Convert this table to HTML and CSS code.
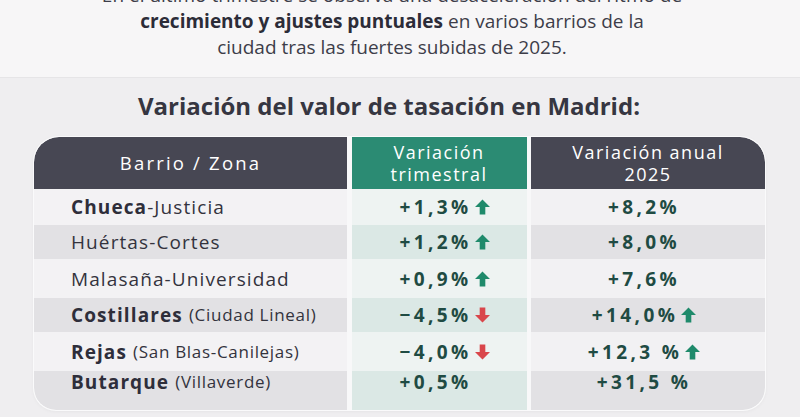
FILE: index.html
```html
<!DOCTYPE html>
<html lang="es">
<head>
<meta charset="utf-8">
<title>Variación del valor de tasación en Madrid</title>
<link rel="stylesheet" href="styles.css">
</head>
<body>
<header class="top">
  <p class="intro">En el último trimestre se observa una desaceleración del ritmo de<br><strong>crecimiento y ajustes puntuales</strong> en varios barrios de la<br>ciudad tras las fuertes subidas de 2025.</p>
</header>
<main class="content">
  <h1 class="title">Variación del valor de tasación en Madrid:</h1>
  <div class="table">
    <div class="th th-dark th-left wide">Barrio / Zona</div>
    <div class="th th-green">Variación<br>trimestral</div>
    <div class="th th-dark th-right">Variación anual<br>2025</div>

    <div class="td name light"><b>Chueca</b>-Justicia</div>
    <div class="td q light">+1,3%<svg class="arrow up" viewBox="0 0 16 16"><path d="M8 0 L16 8 L11 8 L11 16 L5 16 L5 8 L0 8 Z"/></svg></div>
    <div class="td y light">+8,2%</div>

    <div class="td name gray">Huértas-Cortes</div>
    <div class="td q gray">+1,2%<svg class="arrow up" viewBox="0 0 16 16"><path d="M8 0 L16 8 L11 8 L11 16 L5 16 L5 8 L0 8 Z"/></svg></div>
    <div class="td y gray">+8,0%</div>

    <div class="td name light">Malasaña-Universidad</div>
    <div class="td q light">+0,9%<svg class="arrow up" viewBox="0 0 16 16"><path d="M8 0 L16 8 L11 8 L11 16 L5 16 L5 8 L0 8 Z"/></svg></div>
    <div class="td y light">+7,6%</div>

    <div class="td name gray"><b>Costillares</b>&nbsp;<span class="sub">(Ciudad Lineal)</span></div>
    <div class="td q gray">−4,5%<svg class="arrow down" viewBox="0 0 16 16"><path d="M5 0 L11 0 L11 8 L16 8 L8 16 L0 8 L5 8 Z"/></svg></div>
    <div class="td y gray">+14,0%<svg class="arrow up" viewBox="0 0 16 16"><path d="M8 0 L16 8 L11 8 L11 16 L5 16 L5 8 L0 8 Z"/></svg></div>

    <div class="td name light"><b>Rejas</b>&nbsp;<span class="sub">(San Blas-Canilejas)</span></div>
    <div class="td q light">−4,0%<svg class="arrow down" viewBox="0 0 16 16"><path d="M5 0 L11 0 L11 8 L16 8 L8 16 L0 8 L5 8 Z"/></svg></div>
    <div class="td y light">+12,3 %<svg class="arrow up" viewBox="0 0 16 16"><path d="M8 0 L16 8 L11 8 L11 16 L5 16 L5 8 L0 8 Z"/></svg></div>

    <div class="td name gray last"><b>Butarque</b>&nbsp;<span class="sub">(Villaverde)</span></div>
    <div class="td q gray last">+0,5%</div>
    <div class="td y gray last">+31,5 %</div>
  </div>
</main>
</body>
</html>
```

FILE: styles.css
```css
* { box-sizing: border-box; }
html, body { margin: 0; padding: 0; }
body {
  width: 800px;
  height: 417px;
  overflow: hidden;
  background: #efeef0;
  font-family: "Open Sans", "Noto Sans", sans-serif;
  color: #33333f;
}
.top {
  height: 78px;
  overflow: hidden;
  background: #f7f6f7;
  border-bottom: 1px solid #e6e5e7;
}
.intro {
  margin: -18px 0 0;
  padding-right: 16px;
  text-align: center;
  font-size: 19px;
  line-height: 26px;
  color: #3d3d49;
}
.intro strong { font-weight: 700; color: #2c2c38; }
.content {
  padding: 12px 34px 0 34px;
}
.title {
  margin: 0 0 15px;
  padding-right: 22px;
  text-align: center;
  font-size: 24px;
  line-height: 32px;
  font-weight: 700;
  color: #363641;
}
.table {
  display: grid;
  grid-template-columns: 313px 175px 234px;
  column-gap: 4.5px;
  grid-template-rows: 52px 36px 34px 39px 34px 39px 39px;
  width: 731px;
  background: #f8f8f9;
  border-radius: 25px 25px 22px 22px;
  overflow: hidden;
  box-shadow: 0 0 0 1px #fafafb, 0 1px 4px rgba(0,0,0,0.06);
}
.th {
  display: flex;
  align-items: center;
  justify-content: center;
  text-align: center;
  color: #fff;
  font-size: 18px;
  font-weight: 500;
  line-height: 22px;
  letter-spacing: 1.5px;
}
.th.wide { font-size: 18.5px; letter-spacing: 2.2px; }
.th-dark { background: #474753; }
.th-green { background: #2b8b73; }
.th-left { border-top-left-radius: 25px; }
.th-right { border-top-right-radius: 25px; }
.td {
  display: flex;
  align-items: center;
  line-height: 22px;
}
.name {
  padding-left: 37px;
  font-size: 19px;
  color: #33333d;
  letter-spacing: 1.1px;
  white-space: nowrap;
}
.name b { font-weight: 700; color: #2e2e3a; }
.name .sub { font-size: 17px; letter-spacing: 0.7px; }
.q, .y {
  font-size: 19px;
  font-weight: 700;
  letter-spacing: 3.4px;
  color: #1f4b43;
}
.q { padding-left: 48px; }
.y { justify-content: center; padding-right: 8px; }
.name.light { background: #f3f2f4; }
.name.gray { background: #e2e1e4; }
.q.light { background: #eef3f2; }
.q.gray { background: #dbe8e5; }
.y.light { background: #f2f1f3; }
.y.gray { background: #e2e1e4; }
.last { align-items: flex-start; padding-top: 0; }
.name.last { border-bottom-left-radius: 22px; }
.y.last { border-bottom-right-radius: 22px; }
.arrow {
  width: 15px;
  height: 16px;
  margin-left: 3px;
  flex: none;
}
.arrow.up { fill: #1f8a6b; }
.arrow.down { fill: #d9464b; }
```
